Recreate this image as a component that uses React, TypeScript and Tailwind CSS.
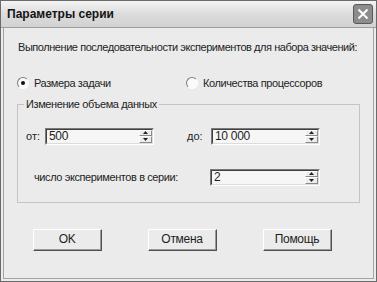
import React from 'react'

const font = { fontFamily: '"Liberation Sans", Arial, sans-serif' }

function Spin() {
  return (
    <div className="flex flex-col w-[13px] h-full">
      {['up', 'down'].map((d) => (
        <div
          key={d}
          className="flex-1 flex items-center justify-center bg-[#ececec] border-t border-l border-t-white border-l-white border-b border-r border-b-[#8a8a8a] border-r-[#8a8a8a]"
        >
          <svg width="5" height="3" viewBox="0 0 5 3">
            {d === 'up' ? <path d="M2.5 0 L5 3 L0 3 Z" fill="#222" /> : <path d="M0 0 L5 0 L2.5 3 Z" fill="#222" />}
          </svg>
        </div>
      ))}
    </div>
  )
}

function SpinField({ value, width }: { value: string; width: string }) {
  return (
    <div className={`flex h-[17px] ${width} border border-t-[#7a7a7a] border-l-[#7a7a7a] border-b-white border-r-white`}>
      <div className="flex flex-1 border border-t-[#404040] border-l-[#404040] border-b-[#dcdcdc] border-r-[#dcdcdc] bg-[#f6f6f6]">
        <span className="flex-1 pl-[2px] text-[12px] leading-[13px] text-[#1e1e1e] tracking-[-0.3px]">{value}</span>
        <Spin />
      </div>
    </div>
  )
}

function Radio({ checked, label }: { checked?: boolean; label: string }) {
  return (
    <div className="flex items-center gap-[5px]">
      <div className="w-[12px] h-[12px] rounded-full border border-t-[#7c7c7c] border-l-[#7c7c7c] border-b-white border-r-white bg-[#fafafa] flex items-center justify-center">
        {checked && <div className="w-[4px] h-[4px] rounded-full bg-[#111]" />}
      </div>
      <span className="text-[11px] text-[#1e1e1e] tracking-[-0.4px]">{label}</span>
    </div>
  )
}

function Btn({ label }: { label: string }) {
  return (
    <div className="w-[69px] h-[22px] border border-t-white border-l-white border-b-[#505050] border-r-[#505050] bg-[#ebebeb]">
      <div className="w-full h-full flex items-center justify-center border-b border-r border-b-[#9a9a9a] border-r-[#9a9a9a] text-[12px] text-[#1e1e1e] tracking-[-0.3px]">
        {label}
      </div>
    </div>
  )
}

export default function App() {
  return (
    <div style={font} className="w-[377px] h-[282px] bg-[#ebebeb] border border-[#6a6a6a] flex flex-col overflow-hidden">
      {/* title bar */}
      <div className="h-[27px] flex items-center justify-between pl-[6px] pr-[3px] bg-gradient-to-b from-[#f4f4f4] via-[#dcdcdc] to-[#d2d2d2] border-b border-[#9c9c9c]">
        <span className="text-[12px] font-bold text-[#141414]">Параметры серии</span>
        <div className="w-[20px] h-[20px] rounded-[3px] bg-[#8c8c8c] border border-[#5a5a5a] flex items-center justify-center">
          <svg width="12" height="12" viewBox="0 0 12 12">
            <path d="M1.5 1.5 L10.5 10.5 M10.5 1.5 L1.5 10.5" stroke="#fff" strokeWidth="2" />
          </svg>
        </div>
      </div>

      {/* body */}
      <div className="flex-1 mx-[2px] mb-[2px] border border-t-0 border-[#a4a4a4] flex flex-col">
        <p className="mt-[12px] ml-[14px] text-[11px] leading-[14px] text-[#1e1e1e] whitespace-nowrap tracking-[-0.45px]">
          Выполнение последовательности экспериментов для набора значений:
        </p>

        <div className="mt-[21px] ml-[13px] flex">
          <div className="w-[169px]">
            <Radio checked label="Размера задачи" />
          </div>
          <Radio label="Количества процессоров" />
        </div>

        {/* group box */}
        <div className="relative mt-[12px] ml-[13px] w-[343px] h-[99px] border border-[#c4c4c4]">
          <span className="absolute -top-[8px] left-[6px] px-[2px] bg-[#ebebeb] text-[11px] leading-[14px] text-[#1e1e1e] tracking-[-0.4px]">
            Изменение объема данных
          </span>
          <div className="mt-[23px] flex items-center">
            <span className="ml-[8px] w-[19px] text-[11px] text-[#1e1e1e]">от:</span>
            <SpinField value="500" width="w-[109px]" />
            <span className="ml-[33px] w-[24px] text-[11px] text-[#1e1e1e]">до:</span>
            <SpinField value="10 000" width="w-[109px]" />
          </div>
          <div className="mt-[24px] flex items-center">
            <span className="ml-[16px] w-[176px] text-[11px] text-[#1e1e1e] tracking-[-0.4px]">число экспериментов в серии:</span>
            <SpinField value="2" width="w-[110px]" />
          </div>
        </div>

        <div className="mt-[26px] ml-[29px] flex gap-[46px]">
          <Btn label="OK" />
          <Btn label="Отмена" />
          <Btn label="Помощь" />
        </div>
      </div>
    </div>
  )
}
